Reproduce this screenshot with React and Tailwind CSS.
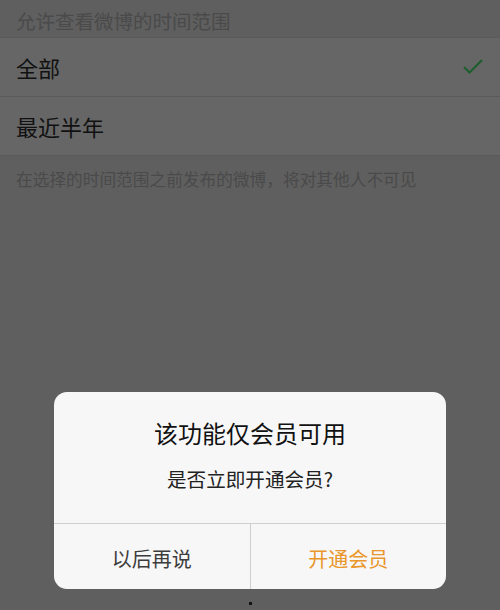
import React from 'react';

const font = { fontFamily: '"Noto Sans CJK SC", "Noto Sans", sans-serif' };

function Row({ label, checked }) {
  return (
    <div className="h-[59px] flex items-center justify-between px-4 bg-[#666666] border-b border-[#5a5a5a]">
      <span className="text-[22px] text-[#111111] leading-none">{label}</span>
      {checked && (
        <svg width="24" height="20" viewBox="0 0 24 20" className="mr-[-1px]">
          <polyline points="3,10 8.5,15.5 21,3" fill="none" stroke="#1c5f2d" strokeWidth="2" />
        </svg>
      )}
    </div>
  );
}

export default function App() {
  return (
    <div className="relative w-[500px] h-[610px] overflow-hidden bg-[#5f5f5f]" style={font}>
      <div className="h-[38px] flex items-center px-4 border-b border-[#5a5a5a]">
        <span className="text-[19.5px] text-[#4a4a4a] leading-none mt-[4px]">允许查看微博的时间范围</span>
      </div>
      <Row label="全部" checked />
      <Row label="最近半年" />
      <div className="px-4 pt-[11px]">
        <span className="text-[16.7px] text-[#4a4a4a] leading-none">在选择的时间范围之前发布的微博，将对其他人不可见</span>
      </div>

      <div className="absolute left-[54px] top-[392px] w-[392px] h-[197px] bg-[#f7f7f7] rounded-[13px] flex flex-col">
        <div className="flex-1 flex flex-col items-center">
          <div className="mt-[26px] text-[24px] text-[#111111] leading-[30px]">该功能仅会员可用</div>
          <div className="mt-[18px] text-[19.6px] text-[#222222] leading-[26px]">是否立即开通会员?</div>
        </div>
        <div className="h-[66px] flex border-t border-[#cfcfcf]">
          <div className="flex-1 flex items-center justify-center pt-[5px] text-[20px] text-[#3c3c3c] border-r border-[#cfcfcf]">以后再说</div>
          <div className="flex-1 flex items-center justify-center pt-[5px] text-[20px] text-[#e9962a]">开通会员</div>
        </div>
      </div>
      <div className="absolute left-[249px] top-[602px] w-[3px] h-[3px] bg-[#111111]" />
    </div>
  );
}
